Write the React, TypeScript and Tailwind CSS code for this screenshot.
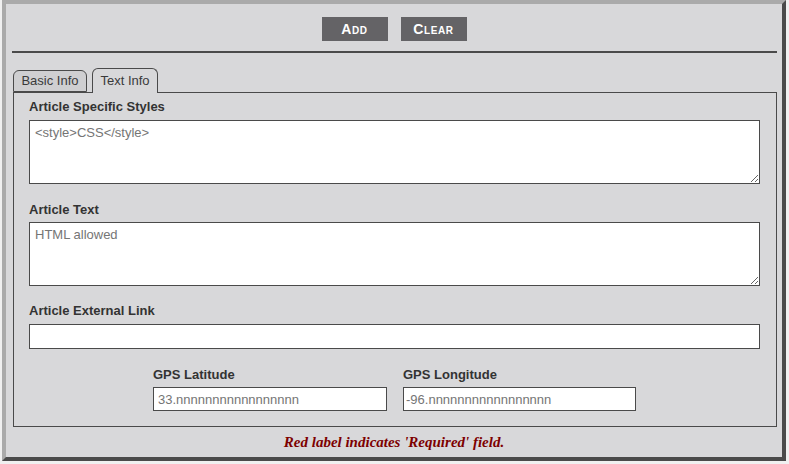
import React from "react";

const nn = "nnnnnnnnnnnnnnnnn";

export default function App() {
  return (
    <div className="w-[789px] h-[464px] bg-[#f0f0f0] pl-[2px] font-['Liberation_Sans',Arial,sans-serif]">
      <div className="w-[784px] h-[461px] bg-[#d8d8da] border-[4px] border-t-[#aaaaaa] border-l-[#aaaaaa] border-r-[#4a4a4a] border-b-[#4a4a4a] flex flex-col px-[6px]">
        <div className="flex justify-center gap-[13px] pt-[13px]">
          <button className="w-[66px] h-[24px] bg-[#646366] text-white font-bold text-[14px] [font-variant:small-caps] tracking-[0.6px]">
            Add
          </button>
          <button className="w-[66px] h-[24px] bg-[#646366] text-white font-bold text-[14px] [font-variant:small-caps] tracking-[0.6px]">
            Clear
          </button>
        </div>
        <div className="h-[2px] bg-[#4a4a4a] mt-[10px] mr-[-1px]" />
        <div className="flex items-end mt-[15px] pl-[1px] gap-[5px] relative z-10">
          <div className="w-[74px] h-[22px] border border-[#4a4a4a] rounded-t-[6px] bg-[#cfcfd1] text-[13px] text-[#3a3a3a] flex items-center justify-center">
            Basic Info
          </div>
          <div className="w-[66px] h-[25px] mb-[-1px] border border-b-0 border-[#4a4a4a] rounded-t-[6px] bg-[#d8d8da] text-[13px] text-[#3a3a3a] flex items-center justify-center">
            Text Info
          </div>
        </div>
        <div className="ml-[1px] w-[764px] h-[335px] border border-[#4a4a4a] pl-[15px] pr-[16px] pt-[6px]">
          <div className="text-[13px] font-bold text-[#333] leading-[16px] mb-[5px]">Article Specific Styles</div>
          <textarea
            className="block w-full h-[64px] bg-white border border-[#4a4a4a] px-[5px] py-[2px] text-[13px] text-[#333] placeholder:text-[#757575] outline-none"
            placeholder="<style>CSS</style>"
          />
          <div className="text-[13px] font-bold text-[#333] leading-[16px] mt-[18px] mb-[4px]">Article Text</div>
          <textarea
            className="block w-full h-[64px] bg-white border border-[#4a4a4a] px-[5px] py-[2px] text-[13px] text-[#333] placeholder:text-[#757575] outline-none"
            placeholder="HTML allowed"
          />
          <div className="text-[13px] font-bold text-[#333] leading-[16px] mt-[17px] mb-[5px]">Article External Link</div>
          <input className="block w-full h-[25px] bg-white border border-[#4a4a4a] px-[5px] text-[13px] outline-none" />
          <div className="flex justify-center gap-[16px] mt-[18px]">
            <div className="w-[234px]">
              <div className="text-[13px] font-bold text-[#333] leading-[16px] mb-[4px]">GPS Latitude</div>
              <input
                className="block w-full h-[24px] bg-white border border-[#4a4a4a] px-[4px] text-[13px] placeholder:text-[#757575] outline-none"
                placeholder={"33." + nn}
              />
            </div>
            <div className="w-[233px]">
              <div className="text-[13px] font-bold text-[#333] leading-[16px] mb-[4px]">GPS Longitude</div>
              <input
                className="block w-full h-[24px] bg-white border border-[#4a4a4a] px-[2px] text-[13px] placeholder:text-[#757575] outline-none"
                placeholder={"-96." + nn}
              />
            </div>
          </div>
        </div>
        <div className="text-center mt-[4px] text-[15px] font-bold italic text-[#7d0000] font-['Liberation_Serif','Times_New_Roman',serif]">
          Red label indicates 'Required' field.
        </div>
      </div>
    </div>
  );
}
